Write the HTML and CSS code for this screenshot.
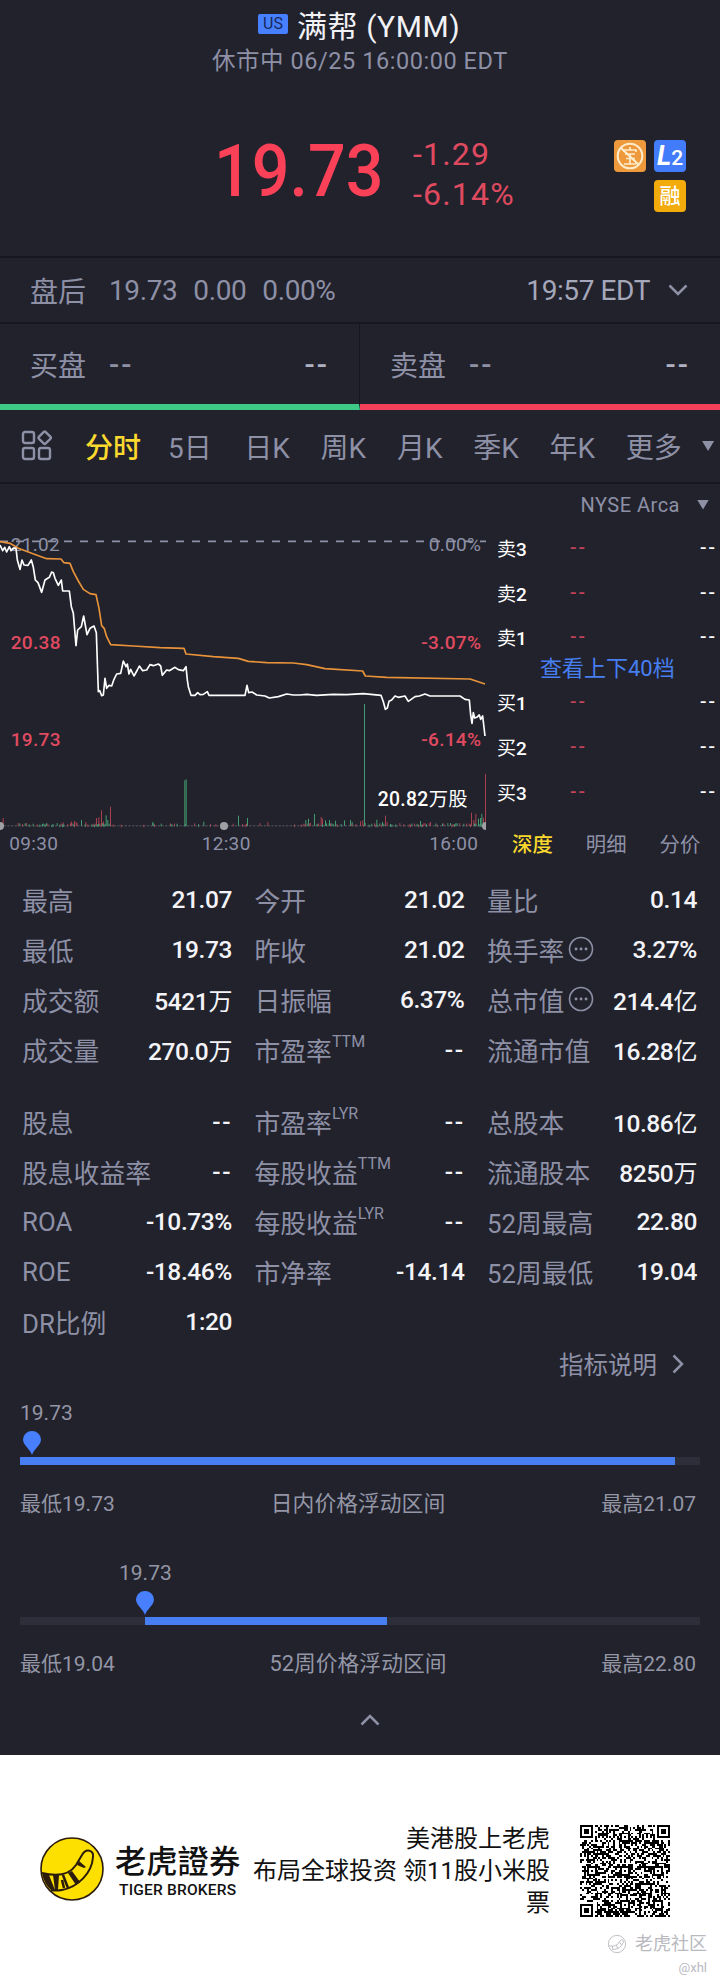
FILE: index.html
```
<!DOCTYPE html>
<html lang="zh-CN">
<head>
    <meta charset="UTF-8">
    <meta name="viewport" content="width=device-width, initial-scale=1.0">
    <title>满帮 (YMM)</title>
    <link rel="stylesheet" href="styles.css">
</head>
<body>
    <div class="quote">
        <header class="title">
            <h1><span class="market">US</span><span class="name">满帮 (YMM)</span></h1>
            <p class="status"><span>休市中 06/25 16:00:00 EDT</span></p>
        </header>

        <section class="price">
            <div class="last"><span>19.73</span></div>
            <div class="change">
                <span>-1.29</span>
                <span>-6.14%</span>
            </div>
            <div class="badges">
                <span class="badge orange">
                    <svg viewBox="0 0 32 32" width="32" height="32" fill="none" stroke="#ffeccc" stroke-width="2">
                        <circle cx="16" cy="16" r="12.3"/>
                        <path d="M7 8 25 25"/>
                        <path d="M10 12v-2h12v2M11 14h10M12 18.500h9M10 24h12M16 14v10M16 7v3" stroke-width="1.700"/>
                    </svg>
                </span>
                <span class="badge blue"><i>L</i>2</span>
                <span class="badge gold">融</span>
            </div>
        </section>

        <section class="after-hours">
            <span class="cn">盘后</span>
            <span class="num">19.73</span>
            <span class="num">0.00</span>
            <span class="num">0.00%</span>
            <span class="time">19:57 EDT</span>
            <svg class="chevron" viewBox="0 0 20 12" width="20" height="12"><path d="M1.500 1.500 10 10 18.500 1.500"/></svg>
        </section>

        <section class="bid-ask">
            <div class="side bid"><span class="cn">买盘</span><span class="dash">--</span><span class="dash qty">--</span></div>
            <div class="side ask"><span class="cn">卖盘</span><span class="dash">--</span><span class="dash qty">--</span></div>
        </section>

        <nav class="periods">
            <svg class="grid-icon" viewBox="0 0 32 32" width="32" height="32">
                <rect x="2" y="2" width="11" height="11" rx="2"/>
                <rect x="2" y="18" width="11" height="11" rx="2"/>
                <rect x="18" y="18" width="11" height="11" rx="2"/>
                <rect x="19" y="3" width="9.500" height="9.500" rx="1.500" transform="rotate(45 23.700 7.700)"/>
            </svg>
            <span class="active">分时</span>
            <span>5日</span>
            <span>日K</span>
            <span>周K</span>
            <span>月K</span>
            <span>季K</span>
            <span>年K</span>
            <span>更多</span>
            <i class="caret"></i>
        </nav>

        <section class="market-view">
            <svg class="chart" viewBox="0 12 1470 1140" width="490" height="380">
                <g class="axis">
                    <path class="prev-close" d="M0 184H1458"/>
                    <text x="32" y="213">21.02</text>
                    <text x="1444" y="213" text-anchor="end">0.00%</text>
                    <text class="down" x="32" y="506">20.38</text>
                    <text class="down" x="1444" y="506" text-anchor="end">-3.07%</text>
                    <text class="down" x="32" y="798">19.73</text>
                    <text class="down" x="1444" y="798" text-anchor="end">-6.14%</text>
                </g>
                <g id="volume"></g>
                <path class="base" d="M0 1037.500H1456"/>
                <g class="dots">
                    <circle cx="0" cy="1038" r="12"/>
                    <circle cx="672" cy="1038" r="12"/>
                    <path d="M1458 1026a12 12 0 0 0 0 24z"/>
                </g>
                <polyline class="average" points="0,185 30,190 55,205 95,220 140,236 183,237 192,248 210,250 220,275 235,303 250,328 270,341 288,344 297,385 305,437 313,446 320,470 332,494 400,498 480,503 552,505 558,522 640,530 715,535 745,544 800,548 880,549 920,554 975,566 1088,573 1096,588 1160,592 1410,597 1455,612"/>
                <polyline class="line" points="0,195 8,212 14,202 20,216 28,200 33,212 40,204 48,205 52,240 60,268 66,240 72,255 84,256 94,240 100,262 106,300 114,308 125,337 135,300 148,292 155,276 160,278 165,295 175,316 184,300 188,333 208,333 214,380 220,400 228,497 233,450 244,440 251,408 261,464 270,445 282,438 289,458 295,635 299,632 305,647 310,645 315,595 320,625 327,616 335,618 342,598 350,582 362,580 370,543 378,560 382,552 387,582 392,568 402,588 412,570 418,558 428,572 440,570 450,554 460,557 475,552 482,558 487,586 500,570 508,572 525,562 535,569 550,572 558,560 562,600 565,620 573,646 585,646 593,638 600,644 610,643 622,635 627,646 735,646 741,616 746,638 756,636 770,645 795,648 808,654 835,650 860,642 880,645 900,645 920,643 950,646 1000,643 1040,644 1090,641 1143,646 1150,665 1156,688 1162,684 1167,664 1175,660 1185,648 1195,652 1215,648 1225,664 1245,650 1258,648 1275,642 1290,648 1380,648 1395,658 1408,660 1412,705 1416,730 1420,698 1424,714 1430,712 1438,705 1442,718 1448,708 1455,768"/>
                <text class="volume-label" x="1133" y="978">20.82<tspan class="unit">万股</tspan></text>
                <g class="times">
                    <text x="28" y="1110">09:30</text>
                    <text x="605" y="1110">12:30</text>
                    <text x="1288" y="1110">16:00</text>
                </g>
            </svg>

            <div class="depth">
                <div class="venue">NYSE Arca <i class="caret"></i></div>
                <div class="level"><span>卖<i>3</i></span><b>--</b><em>--</em></div>
                <div class="level"><span>卖<i>2</i></span><b>--</b><em>--</em></div>
                <div class="level"><span>卖<i>1</i></span><b>--</b><em>--</em></div>
                <a class="more-levels">查看上下40档</a>
                <div class="level"><span>买<i>1</i></span><b>--</b><em>--</em></div>
                <div class="level"><span>买<i>2</i></span><b>--</b><em>--</em></div>
                <div class="level"><span>买<i>3</i></span><b>--</b><em>--</em></div>
                <div class="depth-tabs"><span class="active">深度</span><span>明细</span><span>分价</span></div>
            </div>
        </section>

        <section class="stats">
            <div class="stat"><span>最高</span><b>21.07</b></div>
            <div class="stat"><span>今开</span><b>21.02</b></div>
            <div class="stat"><span>量比</span><b>0.14</b></div>
            <div class="stat"><span>最低</span><b>19.73</b></div>
            <div class="stat"><span>昨收</span><b>21.02</b></div>
            <div class="stat"><span>换手率<svg class="info" viewBox="0 0 26 26" width="26" height="26"><circle cx="13" cy="13" r="11.500"/><path d="M8 13h.1M13 13h.1M18 13h.1"/></svg></span><b>3.27%</b></div>
            <div class="stat"><span>成交额</span><b>5421<i class="unit">万</i></b></div>
            <div class="stat"><span>日振幅</span><b>6.37%</b></div>
            <div class="stat"><span>总市值<svg class="info" viewBox="0 0 26 26" width="26" height="26"><circle cx="13" cy="13" r="11.500"/><path d="M8 13h.1M13 13h.1M18 13h.1"/></svg></span><b>214.4<i class="unit">亿</i></b></div>
            <div class="stat"><span>成交量</span><b>270.0<i class="unit">万</i></b></div>
            <div class="stat"><span>市盈率<sup>TTM</sup></span><b class="dash">--</b></div>
            <div class="stat"><span>流通市值</span><b>16.28<i class="unit">亿</i></b></div>
        </section>
        <section class="stats second">
            <div class="stat"><span>股息</span><b class="dash">--</b></div>
            <div class="stat"><span>市盈率<sup>LYR</sup></span><b class="dash">--</b></div>
            <div class="stat"><span>总股本</span><b>10.86<i class="unit">亿</i></b></div>
            <div class="stat"><span>股息收益率</span><b class="dash">--</b></div>
            <div class="stat"><span>每股收益<sup>TTM</sup></span><b class="dash">--</b></div>
            <div class="stat"><span>流通股本</span><b>8250<i class="unit">万</i></b></div>
            <div class="stat"><span>ROA</span><b>-10.73%</b></div>
            <div class="stat"><span>每股收益<sup>LYR</sup></span><b class="dash">--</b></div>
            <div class="stat"><span>52周最高</span><b>22.80</b></div>
            <div class="stat"><span>ROE</span><b>-18.46%</b></div>
            <div class="stat"><span>市净率</span><b>-14.14</b></div>
            <div class="stat"><span>52周最低</span><b>19.04</b></div>
            <div class="stat"><span>DR比例</span><b>1:20</b></div>
        </section>
        <div class="explain">指标说明
            <svg class="chevron" viewBox="0 0 12 20" width="12" height="20"><path d="M1.500 1.500 10 10 1.500 18.500"/></svg>
        </div>

        <section class="range day">
            <div class="now">19.73</div>
            <svg class="pin" viewBox="0 0 18 24" width="18" height="24"><path d="M9 24C7 18 0 14 0 8.500A9 8.500 0 0 1 18 8.500C18 14 11 18 9 24z"/></svg>
            <div class="track"><div class="fill"></div></div>
            <div class="legend"><span>最低19.73</span><span class="label">日内价格浮动区间</span><span>最高21.07</span></div>
        </section>
        <section class="range year">
            <div class="now">19.73</div>
            <svg class="pin" viewBox="0 0 18 24" width="18" height="24"><path d="M9 24C7 18 0 14 0 8.500A9 8.500 0 0 1 18 8.500C18 14 11 18 9 24z"/></svg>
            <div class="track"><div class="fill"></div></div>
            <div class="legend"><span>最低19.04</span><span class="label">52周价格浮动区间</span><span>最高22.80</span></div>
        </section>
        <div class="collapse">
            <svg class="chevron" viewBox="0 0 20 12" width="20" height="12"><path d="M1.500 10.500 10 2 18.500 10.500"/></svg>
        </div>
    </div>

    <footer class="share">
        <svg class="logo" viewBox="0 0 64 64" width="64" height="64">
            <circle cx="32" cy="32" r="31" fill="#fde000" stroke="#2b1c0c" stroke-width="1.600"/>
            <path d="M2 36C14 39 28 40 36 28L42 18C46 11 54 13 53 20C52 36 38 50 22 53Q16 54 11 53" fill="none" stroke="#2b1c0c" stroke-width="2"/>
            <path d="M2 36 9 38 15 53 11 53Q4 47 2 36zM13 38 19 38 18 53 15 53zM28 36 32 34 40 45 36 48zM37 28 39 24 46 30 44 31z" fill="#2b1c0c"/>
            <path d="M23 38 28 51M24 51 22 43" stroke="#2b1c0c" stroke-width="2.500"/>
        </svg>
        <div class="brand">
            <strong>老虎證券</strong>
            <span>TIGER BROKERS</span>
        </div>
        <p class="slogan">美港股上老虎<br>布局全球投资 领11股小米股<br>票</p>
        <svg class="qr" id="qr" viewBox="0 0 49 49" width="90" height="92" preserveAspectRatio="none" shape-rendering="crispEdges"></svg>
        <div class="watermark">
            <div>
                <svg viewBox="0 0 22 22" width="20" height="20"><circle cx="11" cy="11" r="9.500"/><path d="M2 13q9 2 12-5 4-4 4 1-3 8-12 8M6 13v4M10 12l2 4M14 9l2 3"/></svg>
                老虎社区
            </div>
            <small>@xhl</small>
        </div>
    </footer>

    <script src="script.js"></script>
</body>
</html>
```
FILE: styles.css
```
body {
    margin: 0;
    width: 720px;
    font-family: Roboto, "Noto Sans CJK SC", sans-serif;
    background: #fff;
}

h1, p {
    margin: 0;
    font-weight: 400;
}

.quote {
    height: 1755px;
    background: #21222c;
    color: #8e90a6;
    overflow: hidden;
}

/* Header */
.title {
    height: 76px;
    padding-top: 3px;
    box-sizing: border-box;
}

h1 {
    display: flex;
    align-items: center;
    height: 42px;
    padding-left: 258px;
    gap: 9px;
    color: #f2f2f6;
    font-size: 30px;
    letter-spacing: 0.6px;
    white-space: nowrap;
}

.market {
    width: 30px;
    height: 20px;
    border-radius: 2px;
    background: #4680ff;
    color: #17295c;
    font-size: 16px;
    line-height: 20px;
    letter-spacing: 0;
    text-align: center;
}

.status {
    height: 30px;
    padding-left: 212px;
    font-size: 23.5px;
    line-height: 32px;
    letter-spacing: 0.55px;
    white-space: nowrap;
}

.price {
    display: flex;
    height: 180px;
    border-bottom: 2px solid #161720;
    color: #fb4158;
}

.last {
    width: 199px;
    padding: 57px 0 0 214px;
    font-size: 73px;
    line-height: 76px;
    font-weight: 500;
}

.last span {
    display: inline-block;
    transform: scaleX(0.91);
    transform-origin: left;
}

.change {
    width: 169px;
    padding-top: 58px;
    font-size: 32px;
    line-height: 40px;
    letter-spacing: 1.2px;
    color: #e04a60;
}

.change span {
    display: block;
}

.badges {
    display: flex;
    flex-wrap: wrap;
    justify-content: flex-end;
    align-content: flex-start;
    gap: 8px;
    width: 104px;
    padding-top: 64px;
}

.badge {
    width: 32px;
    height: 32px;
    border-radius: 4px;
    color: #fff;
    font-size: 21px;
    line-height: 32px;
    text-align: center;
    font-weight: 500;
}

.badge i {
    font-size: 27px;
    font-weight: 700;
}

.badge svg {
    display: block;
}

.orange {
    background: #ee9a3c;
}

.blue {
    background: #437cfb;
}

.gold {
    background: #f3ab0c;
}

.after-hours {
    display: flex;
    align-items: center;
    height: 64px;
    padding: 0 32px 0 30px;
    border-bottom: 2px solid #161720;
    font-size: 28px;
    letter-spacing: -0.4px;
}

.cn {
    width: 79px;
    font-size: 28px;
    letter-spacing: 0;
}

.num {
    margin-right: 16px;
}

.time {
    margin-left: auto;
    margin-right: 18px;
    color: #a5a7ba;
}

.chevron {
    fill: none;
    stroke: #8e90a6;
    stroke-width: 2.5;
}

/* Bid and ask */
.bid-ask {
    display: flex;
    height: 86px;
}

.side {
    display: flex;
    align-items: center;
    width: 360px;
    padding: 0 30px 0 30px;
    box-sizing: border-box;
    font-size: 30px;
}

.dash {
    font-weight: 500;
    letter-spacing: 2px;
}

.bid {
    border-right: 1px solid #161720;
    border-bottom: 6px solid #3fc987;
}

.ask {
    border-bottom: 6px solid #f44059;
}

.qty {
    margin-left: auto;
    color: #b0b2c2;
}

.periods {
    display: flex;
    align-items: center;
    height: 72px;
    border-bottom: 2px solid #161720;
    padding-left: 21px;
    font-size: 28px;
    white-space: nowrap;
}

.periods span {
    width: 76.3px;
}

.periods .active {
    width: 83px;
    margin-left: 32px;
    font-weight: 500;
}

.active {
    color: #fbd92e;
}

.grid-icon {
    fill: none;
    stroke: #8e90a6;
    stroke-width: 2.4;
}

.caret {
    flex: none;
    width: 12px;
    height: 10px;
    background: #8e90a6;
    clip-path: polygon(0 0, 100% 0, 50% 100%);
}

/* Intraday chart */
.market-view {
    display: flex;
    height: 380px;
}

.chart {
    flex: none;
    font-size: 57px;
    letter-spacing: 1px;
    fill: #8e90a6;
}

.axis .down {
    fill: #e04a60;
    font-weight: 500;
}

.prev-close {
    stroke: #8e90a6;
    stroke-width: 5;
    stroke-dasharray: 24 24;
}

.base {
    stroke: #74767f;
    stroke-width: 2;
    stroke-dasharray: 7 4;
}

.dots {
    fill: #a0a0a4;
}

.line, .average {
    fill: none;
    stroke: #fff;
    stroke-width: 5;
    stroke-linejoin: round;
}

.average {
    stroke: #e8923a;
}

.volume-label {
    fill: #fff;
    font-size: 58px;
    font-weight: 500;
}

.unit {
    font-style: normal;
    font-weight: 400;
}

.times {
    font-size: 57px;
}

.depth {
    width: 230px;
    font-size: 19px;
}

.venue {
    display: flex;
    justify-content: flex-end;
    align-items: center;
    height: 41px;
    padding-right: 11px;
    gap: 17px;
    font-size: 20px;
    letter-spacing: 0.5px;
}

.level {
    display: flex;
    align-items: center;
    height: 44.8px;
    padding: 0 3px 0 7px;
    color: #fff;
}

.level span {
    width: 73px;
}

.level i {
    font-style: normal;
    font-weight: 500;
}

.level b {
    color: #c54358;
    font-weight: 500;
    letter-spacing: 2px;
}

.level em {
    margin-left: auto;
    font-style: normal;
    font-weight: 500;
    letter-spacing: 2px;
}

.more-levels {
    display: block;
    height: 20px;
    padding-left: 50px;
    color: #477ff2;
    font-size: 22px;
    line-height: 20px;
}

.depth-tabs {
    display: flex;
    gap: 33px;
    padding: 16px 0 0 22px;
    font-size: 20.4px;
    line-height: 30px;
}

.depth-tabs .active {
    font-weight: 500;
}

/* Key figures */
.stats {
    display: grid;
    grid-template-columns: 210px 210px 210px;
    grid-auto-rows: 50.1px;
    column-gap: 22.5px;
    padding: 10px 22px 0;
    font-size: 25.8px;
}

.second {
    padding-top: 22px;
}

.stat {
    display: flex;
    justify-content: space-between;
    align-items: center;
    white-space: nowrap;
}

.stat > span {
    display: flex;
    align-items: center;
}

.stat b {
    color: #f4f4f8;
    font-size: 24.5px;
    font-weight: 500;
    letter-spacing: -0.4px;
}

.stat .dash {
    letter-spacing: 1.5px;
}

.stat .unit {
    font-size: 24px;
}

.stat sup {
    align-self: flex-start;
    font-size: 16px;
    line-height: 22px;
}

.info {
    margin-left: 4px;
    fill: none;
    stroke: #8e90a6;
    stroke-width: 1.6;
    stroke-linecap: round;
}

.info path {
    stroke-width: 2.8;
}

.explain {
    display: flex;
    justify-content: flex-end;
    align-items: center;
    height: 34px;
    padding-right: 36px;
    gap: 15px;
    font-size: 24.5px;
}

/* Price ranges */
.range {
    height: 160px;
    padding: 0 20px;
    box-sizing: border-box;
    font-size: 21px;
    color: #9496a6;
}

.day {
    margin-top: 20px;
}

.now {
    height: 30px;
    line-height: 24px;
}

.pin {
    display: block;
    margin: 0 0 2px 3px;
    fill: #477fff;
}

.year .now {
    margin-left: 99px;
}

.year .pin {
    margin-left: 116px;
}

.track {
    height: 8px;
    background: #2d2e3a;
}

.fill {
    width: 655px;
    height: 8px;
    background: #477ff2;
}

.year .fill {
    width: 242px;
    margin-left: 125px;
}

.legend {
    display: flex;
    justify-content: space-between;
    padding: 24px 4px 0 0;
    line-height: 30px;
}

.label {
    font-size: 21.8px;
}

.collapse {
    height: 12px;
    margin-top: -10px;
    padding-left: 20px;
    text-align: center;
}

/* Footer */
.share {
    position: relative;
    display: flex;
    height: 230px;
    box-sizing: border-box;
    padding: 70px 0 0 40px;
    color: #111;
}

.logo {
    margin-top: 12px;
}

.brand {
    width: 128px;
    margin: 20px 0 0 11px;
    white-space: nowrap;
}

.brand strong {
    display: block;
    font-size: 31.3px;
    line-height: 36px;
    font-weight: 500;
}

.brand span {
    display: block;
    padding-left: 4px;
    font-size: 15.5px;
    line-height: 18px;
    font-weight: 500;
    letter-spacing: 0.2px;
}

.slogan {
    width: 307px;
    margin-top: -2px;
    text-align: right;
    font-size: 24px;
    line-height: 32px;
    white-space: nowrap;
}

.qr {
    margin-left: 30px;
}

.watermark {
    position: absolute;
    right: 13px;
    bottom: 5px;
    color: #b9b9c0;
    text-align: right;
    line-height: 24px;
}

.watermark div {
    display: flex;
    align-items: center;
    gap: 8px;
    font-size: 18px;
}

.watermark svg {
    fill: none;
    stroke: #b9b9c0;
}

.watermark small {
    display: block;
    font-size: 13px;
}
```
FILE: script.js
```
const NS = 'http://www.w3.org/2000/svg';

// Small repeatable generator, so every load draws the same thing
let seed = 20240625;
function random() {
    seed = (seed * 1103515245 + 12345) % 2147483648;
    return seed / 2147483648;
}

function addRect(parent, x, y, width, height, fill) {
    const rect = document.createElementNS(NS, 'rect');
    rect.setAttribute('x', x);
    rect.setAttribute('y', y);
    rect.setAttribute('width', width);
    rect.setAttribute('height', height);
    rect.setAttribute('fill', fill);
    parent.appendChild(rect);
}

// Volume bars: [x, height, direction]
const volume = document.getElementById('volume');
const red = '#a8404f';
const green = '#429b70';
const bars = [
    [8, 24, 'r'], [53, 9, 'r'], [188, 11, 'r'], [213, 13, 'r'], [222, 15, 'r'], [227, 12, 'r'], [243, 18, 'g'],
    [256, 12, 'r'], [288, 24, 'r'], [295, 26, 'r'], [303, 47, 'r'], [309, 14, 'r'], [317, 32, 'g'], [322, 18, 'g'],
    [330, 58, 'r'], [457, 12, 'g'], [553, 137, 'g'], [557, 140, 'g'], [610, 13, 'g'], [714, 31, 'g'], [741, 24, 'g'],
    [802, 12, 'r'], [916, 18, 'g'], [924, 22, 'g'], [942, 36, 'g'], [962, 27, 'r'], [966, 22, 'r'], [975, 17, 'g'],
    [987, 18, 'g'], [1005, 16, 'g'], [1032, 17, 'g'], [1050, 18, 'g'], [1055, 12, 'g'], [1080, 14, 'r'], [1087, 17, 'r'],
    [1092, 366, 'g'], [1129, 19, 'g'], [1146, 12, 'g'], [1155, 31, 'r'], [1160, 12, 'r'], [1260, 15, 'g'],
    [1290, 12, 'r'], [1413, 40, 'r'], [1420, 18, 'r'], [1426, 37, 'r'], [1434, 22, 'g'], [1440, 24, 'g'],
    [1444, 37, 'g'], [1449, 25, 'r'], [1455, 156, 'r']
];
bars.forEach(([x, h, dir]) => addRect(volume, x, 1038 - h, 3, h, dir === 'r' ? red : green));
for (let x = 50; x < 1450; x += 4) {
    const quiet = (x > 340 && x < 880);
    if (random() > (quiet ? 0.85 : 0.45)) {
        addRect(volume, x, 1034 - random() * 5, 3, 8, random() > 0.5 ? red : green);
    }
}

// QR code
const qr = document.getElementById('qr');
const size = 49;

function ring(r, c, top, left, width) {
    return Math.max(Math.abs(r - top - (width - 1) / 2), Math.abs(c - left - (width - 1) / 2));
}

function isDark(r, c) {
    for (const [top, left] of [[0, 0], [0, 42], [42, 0]]) {
        const d = ring(r, c, top, left, 7);
        if (d <= 4) return d === 3 || d <= 1;
    }
    for (const top of [6, 24, 42]) {
        for (const left of [6, 24, 42]) {
            if ((top === 6 && left !== 24) || (top === 42 && left === 6)) continue;
            const d = ring(r, c, top - 2, left - 2, 5);
            if (d <= 2) return d !== 1;
        }
    }
    if (r === 6 || c === 6) return (r + c) % 2 === 0;
    return random() > 0.5;
}

for (let r = 0; r < size; r++) {
    for (let c = 0; c < size; c++) {
        if (isDark(r, c)) addRect(qr, c, r, 1, 1, '#000');
    }
}
```
